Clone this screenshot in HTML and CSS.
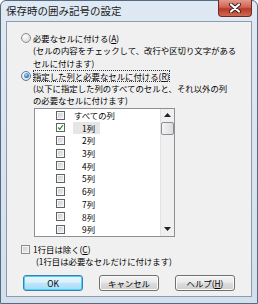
FILE: index.html
```html
<!DOCTYPE html>
<html lang="ja">

<head>
  <meta charset="UTF-8">
  <title>保存時の囲み記号の設定</title>
  <link rel="stylesheet" href="styles.css">
</head>

<body>
  <div class="window">
    <div class="titlebar">
      <div class="title">保存時の囲み記号の設定</div>
      <div class="close">
        <svg width="14" height="10" viewBox="0 0 14 10">
          <path d="M3 1.5 L11 8.5 M11 1.5 L3 8.5" stroke="#3b1d1a" stroke-width="4" stroke-linecap="round" />
          <path d="M3 1.5 L11 8.5 M11 1.5 L3 8.5" stroke="#ffffff" stroke-width="2.2" stroke-linecap="round" />
        </svg>
      </div>
    </div>

    <div class="content">
      <div class="option">
        <span class="radio"></span>
        <div class="opt-text">
          <div>必要なセルに付ける(<u>A</u>)</div>
          <div>(セルの内容をチェックして、改行や区切り文字がある</div>
          <div>セルに付けます)</div>
        </div>
      </div>

      <div class="option option-2">
        <span class="radio checked"></span>
        <div class="opt-text">
          <div><span class="focus">指定した列と必要なセルに付ける(<u>R</u>)</span></div>
          <div>(以下に指定した列のすべてのセルと、それ以外の列</div>
          <div>の必要なセルに付けます)</div>
        </div>
      </div>

      <div class="listbox">
        <div class="items">
          <div class="item"><span class="cb"></span><span class="lbl">すべての列</span></div>
          <div class="item"><span class="cb checked">
              <svg width="9" height="9" viewBox="0 0 9 9">
                <path d="M1.5 4.5 L3.6 6.8 L7.6 1.6" fill="none" stroke="#2f8a2f" stroke-width="1.6" />
              </svg>
            </span><span class="lbl num selected">1列</span></div>
          <div class="item"><span class="cb"></span><span class="lbl num">2列</span></div>
          <div class="item"><span class="cb"></span><span class="lbl num">3列</span></div>
          <div class="item"><span class="cb"></span><span class="lbl num">4列</span></div>
          <div class="item"><span class="cb"></span><span class="lbl num">5列</span></div>
          <div class="item"><span class="cb"></span><span class="lbl num">6列</span></div>
          <div class="item"><span class="cb"></span><span class="lbl num">7列</span></div>
          <div class="item"><span class="cb"></span><span class="lbl num">8列</span></div>
          <div class="item"><span class="cb"></span><span class="lbl num">9列</span></div>
        </div>
        <div class="scroll">
          <div class="arrow">
            <svg width="7" height="4" viewBox="0 0 7 4"><path d="M0 4 L3.5 0 L7 4 Z" fill="#202020" /></svg>
          </div>
          <div class="thumb"></div>
          <div class="track"></div>
          <div class="arrow">
            <svg width="7" height="4" viewBox="0 0 7 4"><path d="M0 0 L3.5 4 L7 0 Z" fill="#202020" /></svg>
          </div>
        </div>
      </div>

      <div class="skip">
        <span class="cb small"></span>
        <div class="skip-text">
          <div>1行目は除く(<u>C</u>)</div>
          <div class="skip-note">(1行目は必要なセルだけに付けます)</div>
        </div>
      </div>

      <div class="buttons">
        <div class="btn default">OK</div>
        <div class="btn">キャンセル</div>
        <div class="btn">ヘルプ(<u>H</u>)</div>
      </div>
    </div>
  </div>
</body>

</html>
```

FILE: styles.css
```css
body {
  margin: 0px;
  font-family: "Noto Sans CJK JP", sans-serif;
  color: #000;
}

.window {
  width: 258px;
  height: 304px;
  box-sizing: border-box;
  border: 1px solid #566a80;
  border-radius: 6px 6px 0 0;
  background: linear-gradient(#dfe9f4, #d3dfec);
  padding: 0 5px 6px 5px;
  display: flex;
  flex-direction: column;
}

.titlebar {
  height: 20px;
  display: flex;
  justify-content: space-between;
  align-items: flex-start;
}

.title {
  font-size: 10.5px;
  line-height: 16px;
  margin: 2px 0 0 0;
  color: #1a1a1a;
}

.close {
  width: 34px;
  height: 17px;
  margin-top: -1px;
  box-sizing: border-box;
  border: 1px solid #6d2a22;
  border-top: none;
  border-radius: 0 0 4px 4px;
  background: linear-gradient(#e3988c, #cf6455 45%, #b8382a 55%, #d06a50);
  display: flex;
  justify-content: center;
  align-items: center;
}

.content {
  flex: 1;
  border: 1px solid #8d9cad;
  background-color: #f0f0f0;
  padding: 10px 0 0 14px;
  font-size: 8.4px;
  line-height: 12.3px;
}

.option {
  display: flex;
  align-items: flex-start;
}

.option-2 {
  margin-top: 1px;
}

.radio {
  width: 10px;
  height: 10px;
  box-sizing: border-box;
  border: 1px solid #8a8c8e;
  border-radius: 50%;
  background: radial-gradient(circle at 40% 35%, #ffffff, #e2e2e2 60%, #cfcfcf);
  margin: 1px 2px 0 0;
  display: flex;
  justify-content: center;
  align-items: center;
  flex-shrink: 0;
}

.radio.checked {
  border-color: #5a7da0;
}

.radio.checked::after {
  content: "";
  width: 5px;
  height: 5px;
  border-radius: 50%;
  background: radial-gradient(circle at 40% 35%, #a8dcff, #2f7fd0 60%, #1b4f8e);
}

.focus {
  outline: 1px dotted #333;
  outline-offset: -1px;
}

.listbox {
  width: 141px;
  height: 129px;
  box-sizing: border-box;
  margin: 1px 0 0 13px;
  border: 1px solid #8c9096;
  background-color: #fff;
  display: flex;
}

.items {
  flex: 1;
}

.item {
  height: 12.7px;
  display: flex;
  align-items: center;
}

.cb {
  width: 9px;
  height: 9px;
  box-sizing: border-box;
  border: 1px solid #5f6469;
  background: linear-gradient(135deg, #c9cbcd, #f4f4f4);
  box-shadow: inset 0 0 0 1px #f6f6f6;
  margin: 0 8px 0 21px;
  display: flex;
  justify-content: center;
  align-items: center;
  flex-shrink: 0;
}

.cb.checked {
  background: #fff;
  box-shadow: none;
}

.lbl {
  padding: 0 1px;
  line-height: 12.2px;
}

.lbl.num {
  padding: 0 5px 0 9px;
}

.lbl.selected {
  background-color: #e6e6e6;
}

.scroll {
  width: 13px;
  border-left: 1px solid #e2e2e2;
  background-color: #f0f0f0;
  display: flex;
  flex-direction: column;
}

.arrow {
  height: 13px;
  display: flex;
  justify-content: center;
  align-items: center;
}

.thumb {
  height: 13px;
  box-sizing: border-box;
  border: 1px solid #8b8e92;
  border-radius: 2px;
  background: linear-gradient(90deg, #f4f4f4, #dcdcdc);
}

.track {
  flex: 1;
}

.skip {
  display: flex;
  align-items: flex-start;
  margin-top: 6px;
}

.cb.small {
  margin: 2px 3px 0 0;
  border-color: #8a8c8e;
}

.skip-note {
  padding-left: 3px;
}

.buttons {
  display: flex;
  gap: 16px;
  margin: 8px 0 0 2px;
}

.btn {
  width: 60px;
  height: 16px;
  box-sizing: border-box;
  border: 1px solid #707070;
  border-radius: 3px;
  background: linear-gradient(#f3f3f3, #ebebeb 45%, #dddddd 50%, #cfcfcf);
  box-shadow: inset 0 0 0 1px #fbfbfb;
  display: flex;
  justify-content: center;
  align-items: center;
  font-size: 8.4px;
  line-height: 12.3px;
}

.btn.default {
  border-color: #3c7fb1;
  box-shadow: inset 0 0 0 1px #48d2fb;
  background: linear-gradient(#eaf6fd, #d9f0fc 45%, #bee6fd 50%, #a7d9f5);
}
```
